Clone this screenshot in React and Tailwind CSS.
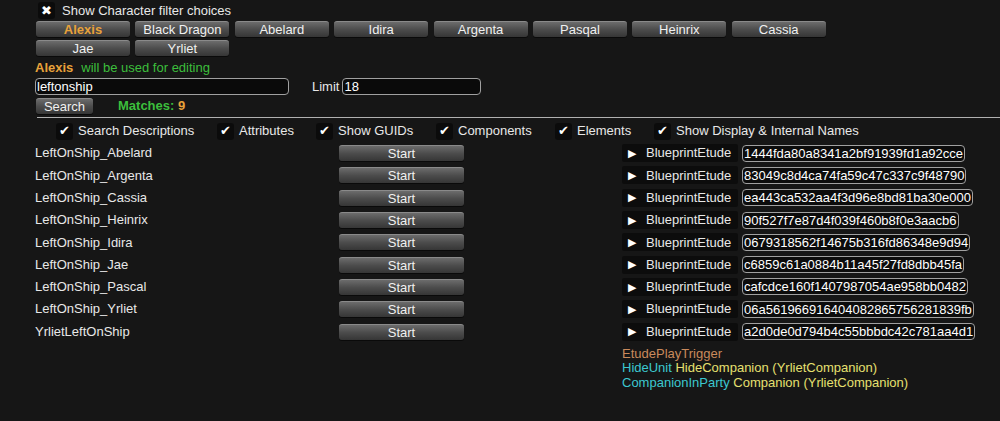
import React from 'react'

const CHARS = ['Alexis', 'Black Dragon', 'Abelard', 'Idira', 'Argenta', 'Pasqal', 'Heinrix', 'Cassia']
const CHARS2 = ['Jae', 'Yrliet']

const ROWS = [
  ['LeftOnShip_Abelard', '1444fda80a8341a2bf91939fd1a92cce'],
  ['LeftOnShip_Argenta', '83049c8d4ca74fa59c47c337c9f48790'],
  ['LeftOnShip_Cassia', 'ea443ca532aa4f3d96e8bd81ba30e000'],
  ['LeftOnShip_Heinrix', '90f527f7e87d4f039f460b8f0e3aacb6'],
  ['LeftOnShip_Idira', '0679318562f14675b316fd86348e9d94'],
  ['LeftOnShip_Jae', 'c6859c61a0884b11a45f27fd8dbb45fa'],
  ['LeftOnShip_Pascal', 'cafcdce160f1407987054ae958bb0482'],
  ['LeftOnShip_Yrliet', '06a561966916404082865756281839fb'],
  ['YrlietLeftOnShip', 'a2d0de0d794b4c55bbbdc42c781aa4d1'],
]

const CHECKS = [
  ['Search Descriptions', 'w-[161px]'],
  ['Attributes', 'w-[99px]'],
  ['Show GUIDs', 'w-[120px]'],
  ['Components', 'w-[119px]'],
  ['Elements', 'w-[99px]'],
  ['Show Display & Internal Names', ''],
]

// shiny gray button used everywhere
const btn =
  'flex items-center justify-center rounded-[3px] border-t border-[#8a8a8a] bg-gradient-to-b from-[#6c6c6c] via-[#4c4c4c] to-[#363636] leading-none shadow-[0_1px_0_#0a0a0a]'

function Check({ mark = '✔' }) {
  return (
    <span className="flex h-[17px] w-[17px] items-center justify-center rounded-[3px] bg-[#0b0b0b] text-[13px] text-white">
      {mark}
    </span>
  )
}

export default function App() {
  return (
    <div
      className="h-[421px] w-[1000px] overflow-hidden bg-[#161616] text-[13px] text-[#e8e8e8]"
      style={{ fontFamily: '"Liberation Sans", Arial, sans-serif' }}
    >
      <div className="flex h-[20px] items-center gap-[7px] pl-[38px] pt-[1px]">
        <Check mark="✖" />
        <span>Show Character filter choices</span>
      </div>

      <div className="mt-[1px] flex gap-[5.4px] pl-[36px]">
        {CHARS.map((c) => (
          <div
            key={c}
            className={`${btn} h-[16px] w-[94px] ${c === 'Alexis' ? 'font-bold text-[#e8a23a]' : 'text-[#f0f0f0]'}`}
          >
            {c}
          </div>
        ))}
      </div>
      <div className="mt-[3px] flex gap-[5.4px] pl-[36px]">
        {CHARS2.map((c) => (
          <div key={c} className={`${btn} h-[16px] w-[94px] text-[#f0f0f0]`}>
            {c}
          </div>
        ))}
      </div>

      <div className="mt-[4px] flex h-[16px] items-center gap-[8px] pl-[35px]">
        <span className="font-bold text-[#e8a23a]">Alexis</span>
        <span className="text-[#3cbf3c]">will be used for editing</span>
      </div>

      <div className="mt-[2px] flex h-[17px] items-center pl-[35px]">
        <div className="flex h-[17px] w-[254px] items-center rounded-[4px] border border-[#a0a0a0] bg-[#0a0a0a] px-[1px] leading-none text-white">
          leftonship
        </div>
        <span className="ml-[23px] mr-[3px]">Limit</span>
        <div className="flex h-[17px] w-[139px] items-center rounded-[4px] border border-[#a0a0a0] bg-[#0a0a0a] px-[1px] leading-none text-white">
          18
        </div>
      </div>

      <div className="mt-[3px] flex h-[16px] items-center pl-[36px]">
        <div className={`${btn} h-[16px] w-[57px] text-[#f0f0f0]`}>Search</div>
        <span className="ml-[25px] font-bold text-[#3cbf3c]">
          Matches: <span className="text-[#e8a23a]">9</span>
        </span>
      </div>

      <div className="ml-[37px] mt-[3px] h-px bg-[#b0b0b0]" />

      <div className="flex h-[23px] items-center pl-[56px] pt-[3px]">
        {CHECKS.map(([label, w]) => (
          <div key={label} className={`flex items-center gap-[5px] ${w}`}>
            <Check />
            <span>{label}</span>
          </div>
        ))}
      </div>

      <div className="mt-[1px]">
        {ROWS.map(([name, guid]) => (
          <div key={name} className="flex h-[22.3px] items-center pl-[35px]">
            <span className="w-[304px]">{name}</span>
            <div className={`${btn} h-[16px] w-[125px] text-[#f0f0f0]`}>Start</div>
            <div className="ml-[158px] flex h-[18px] w-[116px] items-center gap-[10px] rounded-[2px] bg-[#0c0c0c] pl-[6px]">
              <span className="text-[11px] text-white">▶</span>
              <span>BlueprintEtude</span>
            </div>
            <div className="ml-[4px] flex h-[17px] items-center rounded-[4px] border border-[#a0a0a0] bg-[#0c0c0c] px-[1px] leading-none text-white">
              {guid}
            </div>
          </div>
        ))}
      </div>

      <div className="mt-[4px] pl-[622px] leading-[14.5px]">
        <div className="text-[#c98a5c]">EtudePlayTrigger</div>
        <div>
          <span className="text-[#3cc8d0]">HideUnit</span>{' '}
          <span className="text-[#e6e070]">HideCompanion (YrlietCompanion)</span>
        </div>
        <div>
          <span className="text-[#3cc8d0]">CompanionInParty</span>{' '}
          <span className="text-[#e6e070]">Companion (YrlietCompanion)</span>
        </div>
      </div>
    </div>
  )
}
